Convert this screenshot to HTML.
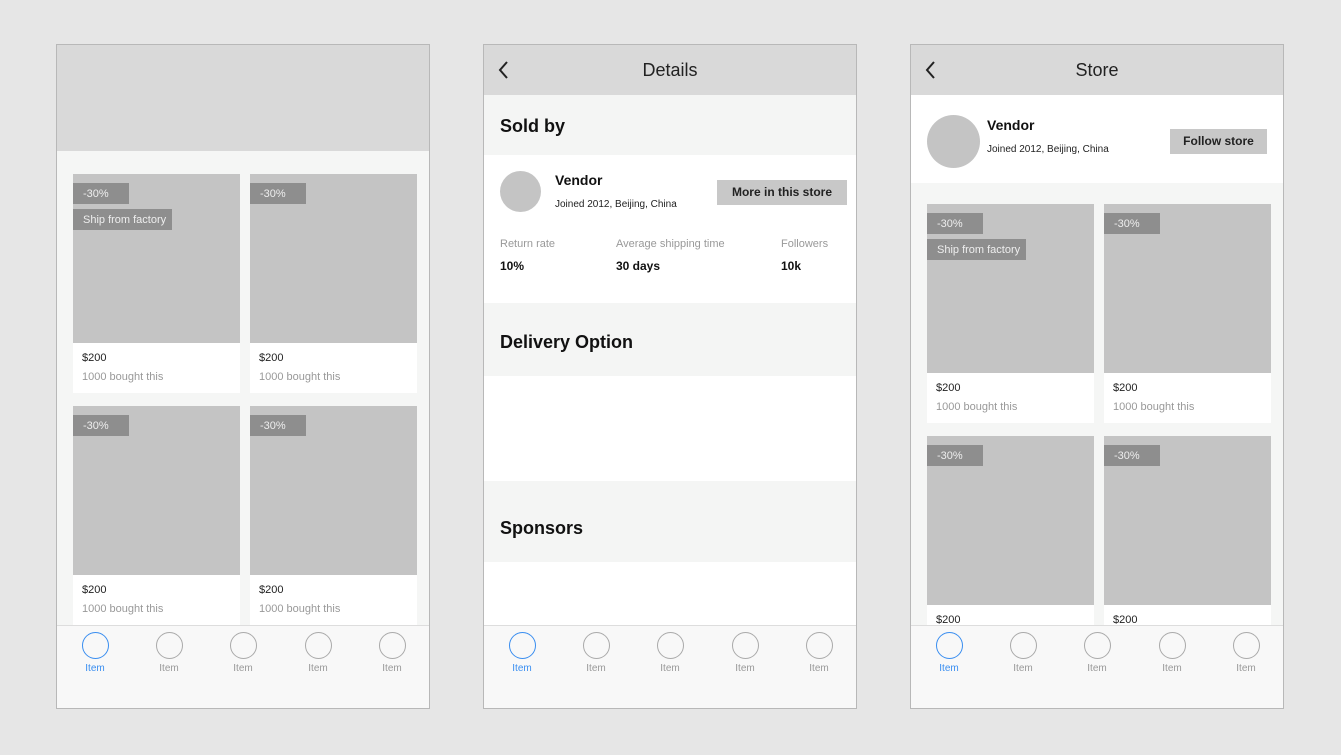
<!DOCTYPE html>
<html><head><style>
*{margin:0;padding:0;box-sizing:border-box}
body{width:1341px;height:755px;background:#e6e6e6;font-family:"Liberation Sans",sans-serif;position:relative;overflow:hidden}
.ph{position:absolute;top:44px;width:374px;height:665px;border:1px solid #b8b8b8;background:#f5f6f5;overflow:hidden}
.a{position:absolute}
.hdr{left:0;top:0;width:372px;background:#d9d9d9}
.card{position:absolute;width:167px;height:219px;background:#fff}
.card .img{position:absolute;left:0;top:0;width:167px;height:169px;background:#c4c4c4}
.b{position:absolute;left:0;background:#8e8e8e;color:#eee;font-size:11px;line-height:21px;padding-left:10px;padding-top:1px;height:21px}
.pr{position:absolute;left:9px;top:178px;font-size:11px;color:#222}
.bo{position:absolute;left:9px;top:197px;font-size:11px;color:#999}
.tab{position:absolute;left:0;top:580px;width:372px;height:85px;background:#f8f8f8;border-top:1px solid #ddd}
.ti{position:absolute;top:6px;width:40px;text-align:center;font-size:10px;color:#999}
.ti i{display:block;width:27px;height:27px;border:1.5px solid #aaa;border-radius:50%;margin:0 auto 4px}
.ti.on{color:#3a8ef0}.ti.on i{border-color:#3a8ef0}
.t{position:absolute;top:0;width:372px;text-align:center;font-size:18px;line-height:50px;color:#222}
.bk{position:absolute;left:14px;top:15px}
</style></head><body>

<!-- phone 1 -->
<div class="ph" style="left:56px">
<div class="a hdr" style="height:106px"></div>
<div class="card" style="left:16px;top:129px"><div class="img"></div><div class="b" style="top:9px;width:56px">-30%</div><div class="b" style="top:35px;width:99px">Ship from factory</div><div class="pr">$200</div><div class="bo">1000 bought this</div></div>
<div class="card" style="left:193px;top:129px"><div class="img"></div><div class="b" style="top:9px;width:56px">-30%</div><div class="pr">$200</div><div class="bo">1000 bought this</div></div>
<div class="card" style="left:16px;top:361px"><div class="img"></div><div class="b" style="top:9px;width:56px">-30%</div><div class="pr">$200</div><div class="bo">1000 bought this</div></div>
<div class="card" style="left:193px;top:361px"><div class="img"></div><div class="b" style="top:9px;width:56px">-30%</div><div class="pr">$200</div><div class="bo">1000 bought this</div></div>
<div class="tab"><div class="ti on" style="left:18px"><i></i>Item</div><div class="ti" style="left:92px"><i></i>Item</div><div class="ti" style="left:166px"><i></i>Item</div><div class="ti" style="left:241px"><i></i>Item</div><div class="ti" style="left:315px"><i></i>Item</div></div>
</div>

<!-- phone 2 -->
<div class="ph" style="left:483px;background:#fff">
<div class="a hdr" style="height:50px"></div>
<svg class="bk" width="12" height="20" viewBox="0 0 12 20"><path d="M9 2L2 10l7 8" stroke="#222" stroke-width="2" fill="none"/></svg>
<div class="t">Details</div>
<div class="a" style="left:0;top:50px;width:372px;height:60px;background:#f4f5f4"></div>
<div class="a" style="left:16px;top:71px;font-size:18px;font-weight:bold;color:#111">Sold by</div>
<div class="a" style="left:16px;top:126px;width:41px;height:41px;border-radius:50%;background:#c4c4c4"></div>
<div class="a" style="left:71px;top:127px;font-size:14px;font-weight:bold;color:#111">Vendor</div>
<div class="a" style="left:71px;top:154px;font-size:10px;color:#222">Joined 2012, Beijing, China</div>
<div class="a" style="left:233px;top:135px;width:130px;height:25px;background:#c8c8c8;font-size:12px;font-weight:bold;text-align:center;line-height:25px;color:#222">More in this store</div>
<div class="a" style="left:16px;top:193px;font-size:11px;color:#999">Return rate</div>
<div class="a" style="left:132px;top:193px;font-size:11px;color:#999">Average shipping time</div>
<div class="a" style="left:297px;top:193px;font-size:11px;color:#999">Followers</div>
<div class="a" style="left:16px;top:214px;font-size:12px;font-weight:bold;color:#111">10%</div>
<div class="a" style="left:132px;top:214px;font-size:12px;font-weight:bold;color:#111">30 days</div>
<div class="a" style="left:297px;top:214px;font-size:12px;font-weight:bold;color:#111">10k</div>
<div class="a" style="left:0;top:258px;width:372px;height:73px;background:#f4f5f4"></div>
<div class="a" style="left:16px;top:287px;font-size:18px;font-weight:bold;color:#111">Delivery Option</div>
<div class="a" style="left:0;top:436px;width:372px;height:81px;background:#f4f5f4"></div>
<div class="a" style="left:16px;top:473px;font-size:18px;font-weight:bold;color:#111">Sponsors</div>
<div class="tab"><div class="ti on" style="left:18px"><i></i>Item</div><div class="ti" style="left:92px"><i></i>Item</div><div class="ti" style="left:166px"><i></i>Item</div><div class="ti" style="left:241px"><i></i>Item</div><div class="ti" style="left:315px"><i></i>Item</div></div>
</div>

<!-- phone 3 -->
<div class="ph" style="left:910px">
<div class="a hdr" style="height:50px"></div>
<svg class="bk" width="12" height="20" viewBox="0 0 12 20"><path d="M9 2L2 10l7 8" stroke="#222" stroke-width="2" fill="none"/></svg>
<div class="t">Store</div>
<div class="a" style="left:0;top:50px;width:372px;height:88px;background:#fff"></div>
<div class="a" style="left:16px;top:70px;width:53px;height:53px;border-radius:50%;background:#c4c4c4"></div>
<div class="a" style="left:76px;top:72px;font-size:14px;font-weight:bold;color:#111">Vendor</div>
<div class="a" style="left:76px;top:99px;font-size:10px;color:#222">Joined 2012, Beijing, China</div>
<div class="a" style="left:259px;top:84px;width:97px;height:25px;background:#c8c8c8;font-size:12px;font-weight:bold;text-align:center;line-height:25px;color:#222">Follow store</div>
<div class="card" style="left:16px;top:159px"><div class="img"></div><div class="b" style="top:9px;width:56px">-30%</div><div class="b" style="top:35px;width:99px">Ship from factory</div><div class="pr">$200</div><div class="bo">1000 bought this</div></div>
<div class="card" style="left:193px;top:159px"><div class="img"></div><div class="b" style="top:9px;width:56px">-30%</div><div class="pr">$200</div><div class="bo">1000 bought this</div></div>
<div class="card" style="left:16px;top:391px"><div class="img"></div><div class="b" style="top:9px;width:56px">-30%</div><div class="pr">$200</div><div class="bo">1000 bought this</div></div>
<div class="card" style="left:193px;top:391px"><div class="img"></div><div class="b" style="top:9px;width:56px">-30%</div><div class="pr">$200</div><div class="bo">1000 bought this</div></div>
<div class="tab"><div class="ti on" style="left:18px"><i></i>Item</div><div class="ti" style="left:92px"><i></i>Item</div><div class="ti" style="left:166px"><i></i>Item</div><div class="ti" style="left:241px"><i></i>Item</div><div class="ti" style="left:315px"><i></i>Item</div></div>
</div>
</body></html>
